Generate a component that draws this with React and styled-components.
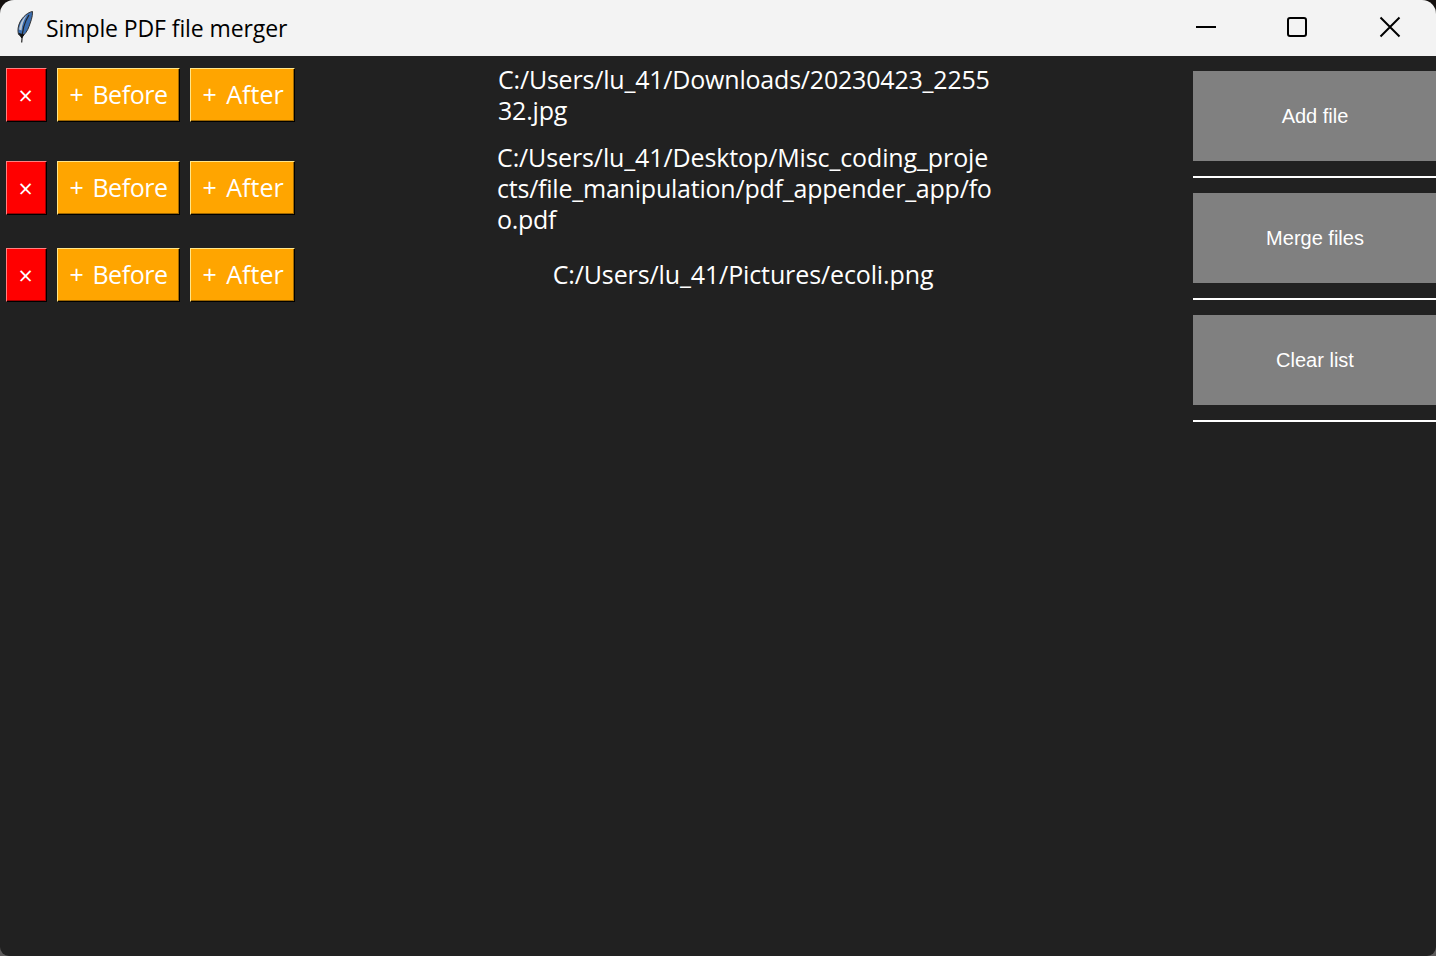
import React from 'react';
import styled, { createGlobalStyle } from 'styled-components';

const GlobalStyle = createGlobalStyle`
  * { box-sizing: border-box; }
  body {
    margin: 0;
    background: linear-gradient(#15110f 0 50%, #5e5c5c 50% 100%);
    font-family: "Open Sans", "Noto Sans", sans-serif;
  }
`;

const Window = styled.div`
  display: flex;
  flex-direction: column;
  width: 100%;
  height: 100vh;
  overflow: hidden;
  border-radius: 14px 14px 9px 9px;
  background: #212121;
`;

const TitleBar = styled.header`
  display: flex;
  align-items: center;
  flex: none;
  height: 56px;
  padding-left: 15px;
  background: #f3f3f3;
  color: #000;
`;

const Feather = styled.svg`
  flex: none;
  width: 20px;
  height: 34px;
  margin-bottom: 2px;
`;

const Title = styled.h1`
  flex: 1;
  margin: 0 0 1px 11px;
  font-size: 23px;
  font-weight: 400;
  line-height: 32px;
  letter-spacing: -0.1px;
`;

const WindowControls = styled.div`
  display: flex;
  height: 100%;
`;

const ControlButton = styled.button`
  display: grid;
  place-items: center;
  width: 92px;
  padding: 0 ${(p) => p.$nudge || 0}px 2px 0;
  border: 0;
  background: transparent;

  svg {
    width: 22px;
    height: 22px;
    fill: none;
    stroke: #000;
    stroke-width: 2;
  }
`;

const Content = styled.main`
  display: flex;
  flex: 1;
`;

const FileList = styled.div`
  flex: 1;
`;

const FileRow = styled.div`
  display: flex;
  align-items: center;
  height: ${(p) => p.$height}px;
  padding-left: 6px;
`;

const RaisedButton = styled.button`
  width: ${(p) => p.$width}px;
  height: 54px;
  margin: 0 10px 0 0;
  padding: 0 0 ${(p) => p.$lift || 0}px 11.5px;
  border: solid;
  border-width: 1px;
  border-color: ${(p) => p.$light} #000 #000 ${(p) => p.$light};
  background: ${(p) => p.$fill};
  box-shadow: inset -1px -1px 0 ${(p) => p.$shade};
  color: #fff;
  font-family: inherit;
  font-size: 25px;
  line-height: 50px;
  letter-spacing: ${(p) => p.$tracking || 0}px;
  word-spacing: 3px;
  text-align: left;
  white-space: pre;
`;

const RemoveButton = styled(RaisedButton).attrs({
  $width: 41, $fill: '#f00', $light: '#ff8080', $shade: '#a00000',
})``;

const InsertButton = styled(RaisedButton).attrs({
  $lift: 2, $fill: '#ffa500', $light: '#ffe68a', $shade: '#a06800',
})``;

const PathCell = styled.div`
  display: flex;
  flex: 1;
  justify-content: center;
  padding-right: 12px;
`;

const PathLabel = styled.div`
  width: ${(p) => (p.$width ? `${p.$width}px` : 'auto')};
  padding-bottom: ${(p) => (p.$width ? 0 : 1)}px;
  color: #fff;
  font-size: 25px;
  line-height: 31px;
`;

const PathLine = styled.div`
  letter-spacing: ${(p) => p.$tracking}px;
  white-space: nowrap;
`;

const Sidebar = styled.aside`
  flex: none;
  width: 243px;
  padding-top: 15px;
`;

const SidebarItem = styled.div`
  height: 107px;
  margin-bottom: 15px;
  border-bottom: 2px solid #fff;
`;

const SidebarButton = styled.button`
  display: block;
  width: 100%;
  height: 90px;
  padding: 0 0 0 1px;
  border: 0;
  background: #808080;
  color: #fff;
  font-family: "Liberation Sans", Arial, sans-serif;
  font-size: 20px;
  line-height: 90px;
`;

const FILES = [
  {
    height: 78,
    width: 490,
    lines: [
      ['C:/Users/lu_41/Downloads/20230423_2255', -0.2],
      ['32.jpg', -0.2],
    ],
  },
  {
    height: 108,
    width: 492,
    lines: [
      ['C:/Users/lu_41/Desktop/Misc_coding_proje', -0.12],
      ['cts/file_manipulation/pdf_appender_app/fo', -0.22],
      ['o.pdf', -0.3],
    ],
  },
  { height: 66, lines: [['C:/Users/lu_41/Pictures/ecoli.png', -0.12]] },
];

const ACTIONS = ['Add file', 'Merge files', 'Clear list'];

function FeatherIcon() {
  return (
    <Feather viewBox="0 0 20 34" aria-hidden="true">
      <path d="M17.5 1.5C13 2.2 8 6.500 5 12C3 16 2.400 20.500 3.500 24.500L6.500 26.500C9.500 25 12.500 21 14 16.500C15.500 12 17.800 7 17.500 1.500Z" fill="#3a6db0" stroke="#333" strokeWidth="1" />
      <path d="M12 5C8 8 5 13 4 19.500L6.500 20.500C7 14.500 8.500 10 12 5Z" fill="#b9c6d4" />
      <path d="M14 5C10 11 7 18 6.700 32.500" fill="none" stroke="#222" strokeWidth="1.200" />
      <path d="M4 23L6.700 28L9 24.500" fill="#111" stroke="#111" />
    </Feather>
  );
}

export default function App() {
  return (
    <>
      <GlobalStyle />
      <Window>
        <TitleBar>
          <FeatherIcon />
          <Title>Simple PDF file merger</Title>
          <WindowControls>
            <ControlButton aria-label="Minimize">
              <svg viewBox="0 0 22 22"><path d="M1 11H21" /></svg>
            </ControlButton>
            <ControlButton aria-label="Maximize" $nudge={2}>
              <svg viewBox="0 0 22 22"><rect x="2" y="2" width="18" height="18" rx="2" /></svg>
            </ControlButton>
            <ControlButton aria-label="Close">
              <svg viewBox="0 0 22 22"><path d="M1.500 1.500L20.500 20.500M20.500 1.500L1.500 20.500" /></svg>
            </ControlButton>
          </WindowControls>
        </TitleBar>
        <Content>
          <FileList>
            {FILES.map((file) => (
              <FileRow key={file.lines[0][0]} $height={file.height}>
                <RemoveButton>×</RemoveButton>
                <InsertButton $width={123} $tracking={-0.45}>+ Before</InsertButton>
                <InsertButton $width={105}>+ After</InsertButton>
                <PathCell>
                  <PathLabel $width={file.width}>
                    {file.lines.map(([text, tracking]) => (
                      <PathLine key={text} $tracking={tracking}>{text}</PathLine>
                    ))}
                  </PathLabel>
                </PathCell>
              </FileRow>
            ))}
          </FileList>
          <Sidebar>
            {ACTIONS.map((label) => (
              <SidebarItem key={label}>
                <SidebarButton>{label}</SidebarButton>
              </SidebarItem>
            ))}
          </Sidebar>
        </Content>
      </Window>
    </>
  );
}
